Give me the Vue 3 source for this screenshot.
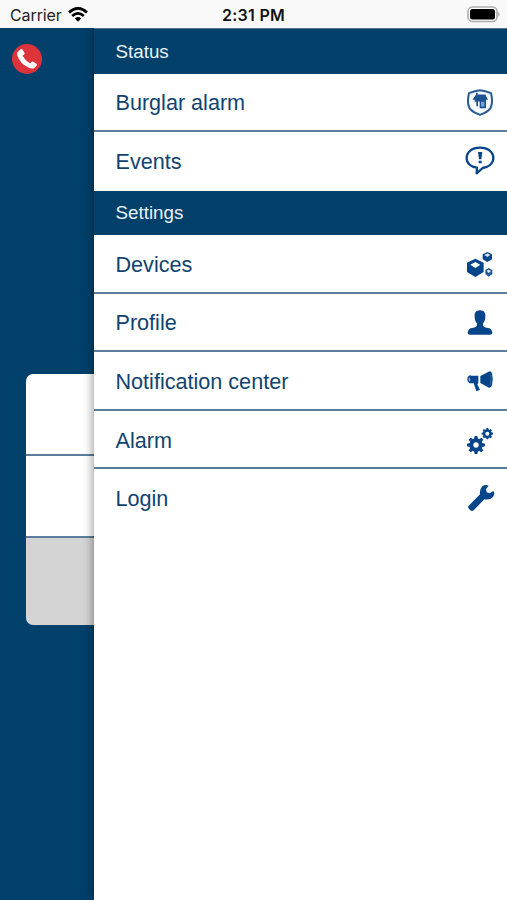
<script setup>
const sections = [
  {
    title: 'Status',
    items: [
      { label: 'Burglar alarm', icon: 'shield', box: '30 19.5 96 96' },
      { label: 'Events', icon: 'bubble', box: '30 31 96 96' },
    ],
  },
  {
    title: 'Settings',
    items: [
      { label: 'Devices', icon: 'cubes', box: '30 25 96 96' },
      { label: 'Profile', icon: 'person', box: '30 21 96 96' },
      { label: 'Notification center', icon: 'megaphone', box: '30 30 96 96' },
      { label: 'Alarm', icon: 'gears', box: '30 25 96 96' },
      { label: 'Login', icon: 'wrench', box: '30 30 96 96' },
    ],
  },
]
</script>

<template>
  <div class="screen">
    <header class="statusbar">
      <div class="carrier">
        <span>Carrier</span>
        <svg class="wifi" viewBox="0 0 20 15">
          <g fill="none" stroke="#000" stroke-width="2.7">
            <path d="M1 5.5Q10-2.7 19 5.5" />
            <path d="M4.2 9Q10 3.8 15.8 9" />
          </g>
          <path d="M6.8 11.5Q10 8.7 13.2 11.5L10 14.8Z" />
        </svg>
      </div>
      <div class="clock">2:31 PM</div>
      <div class="power">
        <svg viewBox="0 0 33 17">
          <rect x="1" y="1" width="29" height="14.5" rx="4.5" fill="#fff" stroke="#adadad" stroke-width="1.6" />
          <rect x="3" y="3" width="25" height="10.5" rx="2.5" />
          <path d="M31.2 5.8Q34 8.2 31.2 10.8Z" fill="#aaa" />
        </svg>
      </div>
    </header>
    <div class="body">
      <aside class="behind">
        <svg class="call" viewBox="0 0 30 30">
          <circle cx="15" cy="15" r="15" fill="#dd343b" />
          <path d="M5.5 8L9 5Q10 4.7 10.5 5.5L12.6 9Q12.9 10 12 10.6L10.5 11.8Q13.2 16.7 18 19.4L19.5 18Q20.3 17.3 21.2 17.8L24.4 19.8Q25.3 20.5 24.7 21.5L22.3 24Q20.2 25.4 16.5 23.6Q8 19.6 5.3 11.2Q4.8 9.2 5.5 8Z" fill="#fff" />
        </svg>
        <div class="card">
          <div class="cell"></div>
          <div class="cell"></div>
          <div class="cell last"></div>
        </div>
      </aside>
      <nav class="drawer">
        <section v-for="s in sections" :key="s.title">
          <h2>{{ s.title }}</h2>
          <ul>
            <li v-for="i in s.items" :key="i.label">
              <span>{{ i.label }}</span>
              <svg class="icon" :viewBox="i.box">
                <template v-if="i.icon === 'shield'">
                  <path d="M75 29Q90 30 108 38Q115 64 107 82Q98 95 75 103Q52 95 43 82Q35 64 42 38Q60 30 75 29Z" fill="#f7fbff" stroke="#275c95" stroke-width="6" />
                  <path d="M56 52L63 43V37H68V42H91L99 58H93V83H74V63H69V77H64V64H59V58H53Z" fill="#1d548f" />
                  <path d="M78 64H88V78H78Z" fill="#7fa4c8" />
                </template>
                <template v-else-if="i.icon === 'bubble'">
                  <path d="M75 36C99 36 115 49 115 67C115 83 101 94 83 97L65 113L66 96C47 93 35 82 35 67C35 49 51 36 75 36Z" fill="#fff" stroke="#07458b" stroke-width="7" stroke-linejoin="round" />
                  <path d="M69 49H82L79 71H72ZM71 75H80V83H71Z" />
                </template>
                <template v-else-if="i.icon === 'cubes'">
                  <path d="M61 54L86 66V94L61 109L36 94V66Z" />
                  <path d="M61 64L76 72L61 82L46 72Z" fill="#fff" />
                  <path d="M97 34L111 41V56L97 64L83 56V41Z" />
                  <path d="M97 38L106 43L97 49L88 43Z" fill="#d5e1ef" />
                  <path d="M101 82L112 88V100L101 108L91 100V88Z" fill="#245b98" />
                  <path d="M101 87L108 91L101 97L95 91Z" fill="#e5edf5" />
                </template>
                <path v-else-if="i.icon === 'person'" d="M75 31C88 31 92 40 91 50C91 60 88 66 84 70V77Q89 83 103 85Q111 88 112 99Q111 104 105 104H45Q39 104 38 99Q39 88 47 85Q61 83 66 77V70C62 66 59 60 59 50C58 40 62 31 75 31Z" />
                <template v-else-if="i.icon === 'megaphone'">
                  <path d="M42 59Q44 57 50 59H70V82L67 84L75 102L64 106L56 82H44Q38 80 37 71Q36 62 42 59Z" />
                  <path d="M43 64Q49 70 45 77Q40 75 41 69Z" fill="#9bb9d6" />
                  <path d="M76 60L101 47Q107 43 111 52Q116 71 111 88Q108 97 102 95L76 81Z" />
                  <path d="M106 53Q110 70 106 88" fill="none" stroke="#4776aa" stroke-width="2" />
                </template>
                <template v-else-if="i.icon === 'gears'">
                  <g transform="translate(63 85)">
                    <path v-for="n in 8" :key="n" :transform="`rotate(${n * 45})`" d="M-6-18L-4-27H4L6-18Z" />
                    <circle r="14" fill="none" stroke="#07458b" stroke-width="12" />
                  </g>
                  <g transform="translate(97 51)">
                    <path v-for="n in 8" :key="n" :transform="`rotate(${n * 45})`" d="M-4-11L-2.5-17H2.5L4-11Z" />
                    <circle r="9.5" fill="none" stroke="#07458b" stroke-width="7" />
                  </g>
                </template>
                <path v-else d="M41 98L75 64Q73 49 82 40Q91 33 101 38L93 48L95 58L104 61L115 54Q121 62 114 72Q104 82 88 79L56 112Q51 116 45 111L40 105Q38 101 41 98Z" />
              </svg>
            </li>
          </ul>
        </section>
      </nav>
    </div>
  </div>
</template>

<style>
body { margin: 0; }
</style>

<style scoped>
.screen { height: 900px; display: flex; flex-direction: column; background: #00406a; font-family: "Liberation Sans", Arial, sans-serif; overflow: hidden; }
.statusbar { height: 28px; flex: none; display: grid; grid-template-columns: 1fr auto 1fr; align-items: center; background: #f9f9f9; color: #222; font-family: Inter, sans-serif; font-size: 16px; box-sizing: border-box; padding: 1px 7px 0 10px; }
.carrier { display: flex; align-items: center; gap: 6px; letter-spacing: -0.1px; }
.wifi { width: 20px; height: 15px; }
.clock { font-weight: 600; color: #111; font-size: 16px; letter-spacing: 0.3px; margin-right: 3px; }
.power { display: flex; justify-content: flex-end; }
.power svg { width: 33px; height: 17px; }
.body { flex: 1; display: flex; min-height: 0; }
.behind { width: 94px; flex: none; box-sizing: border-box; padding: 16px 0 0 12px; }
.call { display: block; width: 30px; height: 30px; }
.card { margin: 300px 0 0 14px; border-radius: 7px 0 0 7px; overflow: hidden; height: 251px; }
.cell { height: 82px; box-sizing: border-box; background: #fff; border-bottom: 2px solid #5b7d9b; }
.cell.last { height: 87px; border: 0; background: #d4d4d4; }
.drawer { position: relative; flex: 1; background: #fff; box-shadow: 0 0 10px rgba(0, 0, 0, 0.5); clip-path: inset(0 0 0 -14px); border-top: 1px solid #55748f; }
h2 { margin: 0; height: 44.5px; padding: 1px 0 0 21.5px; display: flex; align-items: center; box-sizing: border-box; background: #00406a; color: #eaf3fa; font-size: 18.8px; font-weight: 400; }
ul { margin: 0; padding: 0; list-style: none; }
li { height: 58.55px; box-sizing: border-box; padding: 3px 10px 0 21.5px; display: flex; align-items: center; justify-content: space-between; border-bottom: 2px solid #5b7d9b; color: #10446f; font-size: 21.6px; }
li:last-child { border-bottom-color: transparent; }
.icon { width: 32px; height: 32px; fill: #07458b; }
</style>
